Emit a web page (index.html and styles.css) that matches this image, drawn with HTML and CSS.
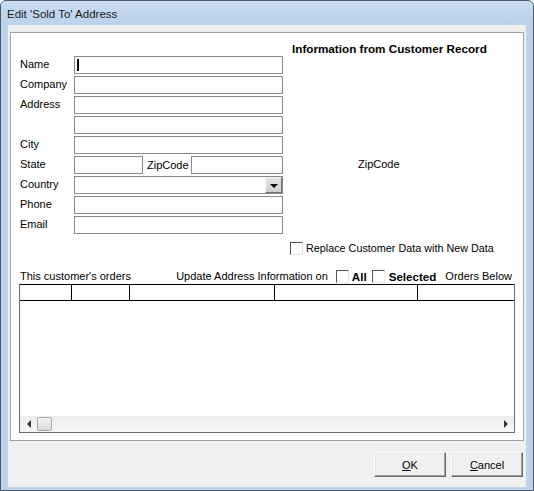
FILE: index.html
```html
<!DOCTYPE html>
<html lang="en">
<head>
    <meta charset="UTF-8">
    <title>Edit 'Sold To' Address</title>
    <link rel="stylesheet" href="styles.css">
</head>
<body>
<div class="window">
    <div class="titlebar">Edit 'Sold To' Address</div>
    <div class="client">
        <div class="panel">
            <div class="top">
                <div class="form">
                    <span class="label">Name</span>
                    <div class="field"><span class="caret"></span></div>
                    <span class="label">Company</span>
                    <div class="field"></div>
                    <span class="label">Address</span>
                    <div class="field"></div>
                    <span class="label"></span>
                    <div class="field"></div>
                    <span class="label">City</span>
                    <div class="field"></div>
                    <span class="label">State</span>
                    <div class="state-row">
                        <div class="field field-state"></div>
                        <span class="label zip-label">ZipCode</span>
                        <div class="field field-zip"></div>
                    </div>
                    <span class="label">Country</span>
                    <div class="field field-select">
                        <span class="select-btn"><span class="arrow"></span></span>
                    </div>
                    <span class="label">Phone</span>
                    <div class="field"></div>
                    <span class="label">Email</span>
                    <div class="field"></div>
                </div>
                <div class="info">
                    <div class="info-title">Information from Customer Record</div>
                    <div class="info-zip">ZipCode</div>
                </div>
            </div>

            <div class="replace">
                <span class="check"></span>
                <span>Replace Customer Data with New Data</span>
            </div>

            <div class="orders-bar">
                <span>This customer's orders</span>
                <div class="update-group">
                    <span>Update Address Information on</span>
                    <span class="check check-all"></span>
                    <b>All</b>
                    <span class="check check-sel"></span>
                    <b>Selected</b>
                    <span class="below">Orders Below</span>
                </div>
            </div>

            <div class="grid">
                <div class="grid-head">
                    <div class="col col1"></div>
                    <div class="col col2"></div>
                    <div class="col col3"></div>
                    <div class="col col4"></div>
                    <div class="col col5"></div>
                </div>
                <div class="grid-body"></div>
                <div class="hscroll">
                    <span class="scroll-btn"><span class="tri-left"></span></span>
                    <span class="thumb"></span>
                    <span class="track"></span>
                    <span class="scroll-btn"><span class="tri-right"></span></span>
                </div>
            </div>
        </div>

        <div class="buttons">
            <button class="btn"><u>O</u>K</button>
            <button class="btn"><u>C</u>ancel</button>
        </div>
    </div>
</div>
</body>
</html>
```

FILE: styles.css
```css
html, body {
    margin: 0;
    padding: 0;
    background: #ffffff;
}

.window {
    width: 534px;
    height: 491px;
    box-sizing: border-box;
    border: 1px solid #4d5866;
    border-radius: 6px 6px 0 0;
    background: #bfd4eb;
    display: flex;
    flex-direction: column;
    font-family: "Liberation Sans", Arial, sans-serif;
    font-size: 11px;
    color: #000;
}

.titlebar {
    height: 24px;
    line-height: 26px;
    padding-left: 6px;
    font-size: 11.5px;
    color: #1a1a1a;
    background: linear-gradient(#c9dcf0, #bad1ea);
    border-radius: 5px 5px 0 0;
}

.client {
    height: 462px;
    margin: 0 7px;
    background: #f0f0f0;
    display: flex;
    flex-direction: column;
}

.panel {
    height: 409px;
    box-sizing: border-box;
    margin: 7px 2px 0 2px;
    border: 1px solid #a0a0a0;
    background: #ffffff;
}

/* top area: form + customer record */
.top {
    display: flex;
    padding-left: 9px;
}

.form {
    margin-top: 23px;
    width: 263px;
    display: grid;
    grid-template-columns: 54px 209px;
    grid-auto-rows: 18px;
    row-gap: 2px;
    align-items: center;
}

.label {
    line-height: 13px;
    margin-top: -1px;
}

.field {
    height: 18px;
    box-sizing: border-box;
    border: 1px solid #8a8a8a;
    background: #fff;
    position: relative;
}

.caret {
    position: absolute;
    left: 2px;
    top: 2px;
    width: 2px;
    height: 12px;
    background: #000;
}

.state-row {
    display: flex;
    align-items: center;
}

.field-state {
    width: 69px;
}

.zip-label {
    width: 44px;
    margin-left: 4px;
    margin-top: 0;
}

.field-zip {
    flex: 1;
}

.field-select {
    display: flex;
    justify-content: flex-end;
}

.select-btn {
    width: 17px;
    height: 16px;
    box-sizing: border-box;
    border: 1px solid;
    border-color: #f4f4f4 #707070 #707070 #f4f4f4;
    background: linear-gradient(#e6e6e6, #cfcfcf);
    display: flex;
    align-items: center;
    justify-content: center;
}

.arrow {
    width: 0;
    height: 0;
    border-left: 4px solid transparent;
    border-right: 4px solid transparent;
    border-top: 4px solid #000;
    margin-top: 2px;
}

.info {
    margin-left: 9px;
    padding-top: 9px;
}

.info-title {
    font-weight: bold;
    font-size: 11.7px;
    line-height: 13px;
}

.info-zip {
    margin-top: 103px;
    margin-left: 66px;
    line-height: 13px;
}

/* checkboxes */
.check {
    display: inline-block;
    width: 13px;
    height: 13px;
    box-sizing: border-box;
    border: 1px solid;
    border-color: #555 #e6e6e6 #e6e6e6 #555;
    background: #fff;
}

.replace {
    margin-top: 8px;
    padding-left: 279px;
    display: flex;
    align-items: center;
    gap: 3px;
    height: 13px;
    line-height: 13px;
    font-size: 10.8px;
}

.orders-bar {
    margin-top: 14px;
    height: 14px;
    display: flex;
    align-items: center;
    padding: 0 11px 0 9px;
}

.update-group {
    margin-left: auto;
    display: flex;
    align-items: center;
}

.update-group b {
    font-size: 11.6px;
}

.check-all {
    margin: 0 3px 0 8px;
}

.check-sel {
    margin: 0 4px 0 5px;
}

.below {
    margin-left: 9px;
}

/* orders list */
.grid {
    margin: 1px 0 0 8px;
    width: 496px;
    height: 149px;
    box-sizing: border-box;
    border: 1px solid #6b6b6b;
    display: flex;
    flex-direction: column;
}

.grid-head {
    display: flex;
    height: 15px;
    border-bottom: 1px solid #000;
    border-top: 1px solid #000;
    margin-top: -1px;
}

.col {
    box-sizing: border-box;
    border-right: 1px solid #000;
}

.col1 { width: 52px; }
.col2 { width: 58px; }
.col3 { width: 145px; }
.col4 { width: 143px; }
.col5 { flex: 1; border-right: none; }

.grid-body {
    flex: 1;
    background: #fff;
}

.hscroll {
    height: 16px;
    display: flex;
    background: linear-gradient(#ececec, #f6f6f6);
}

.scroll-btn {
    width: 17px;
    display: flex;
    align-items: center;
    justify-content: center;
}

.tri-left {
    border-top: 4px solid transparent;
    border-bottom: 4px solid transparent;
    border-right: 4px solid #333;
}

.tri-right {
    border-top: 4px solid transparent;
    border-bottom: 4px solid transparent;
    border-left: 4px solid #333;
}

.thumb {
    width: 15px;
    margin: 1px 0;
    box-sizing: border-box;
    border: 1px solid #a8a8a8;
    border-radius: 2px;
    background: linear-gradient(#f4f4f4, #dadada);
}

.track {
    flex: 1;
}

/* dialog buttons */
.buttons {
    margin-top: 11px;
    padding-right: 3px;
    display: flex;
    justify-content: flex-end;
    gap: 5px;
}

.btn {
    width: 72px;
    height: 25px;
    box-sizing: border-box;
    border: 1px solid;
    border-color: #fdfdfd #6a6a6a #6a6a6a #fdfdfd;
    box-shadow: inset -1px -1px #a0a0a0, inset 1px 1px #e3e3e3;
    background: #f0f0f0;
    font-family: "Liberation Sans", Arial, sans-serif;
    font-size: 11px;
    color: #000;
    padding: 0;
}
```
